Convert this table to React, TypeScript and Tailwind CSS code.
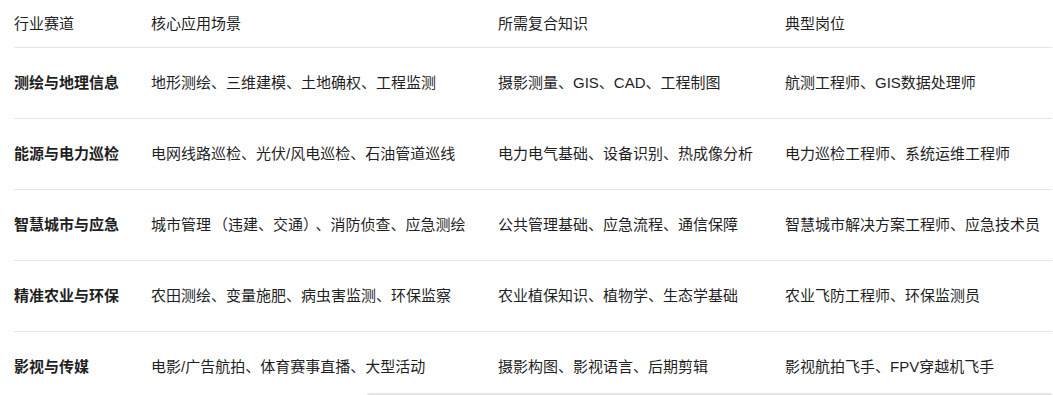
import React from "react";

const header = ["行业赛道", "核心应用场景", "所需复合知识", "典型岗位"];
const rows = [
  ["测绘与地理信息", "地形测绘、三维建模、土地确权、工程监测", "摄影测量、GIS、CAD、工程制图", "航测工程师、GIS数据处理师"],
  ["能源与电力巡检", "电网线路巡检、光伏/风电巡检、石油管道巡线", "电力电气基础、设备识别、热成像分析", "电力巡检工程师、系统运维工程师"],
  ["智慧城市与应急", "城市管理（违建、交通）、消防侦查、应急测绘", "公共管理基础、应急流程、通信保障", "智慧城市解决方案工程师、应急技术员"],
  ["精准农业与环保", "农田测绘、变量施肥、病虫害监测、环保监察", "农业植保知识、植物学、生态学基础", "农业飞防工程师、环保监测员"],
  ["影视与传媒", "电影/广告航拍、体育赛事直播、大型活动", "摄影构图、影视语言、后期剪辑", "影视航拍飞手、FPV穿越机飞手"],
];

const cols = "grid grid-cols-[137px_347px_287px_1fr]";

function Cell({ text }: { text: string }) {
  if (text.includes("（")) {
    return (
      <div className="whitespace-nowrap">
        城市管理<span className="ml-[2px]">（</span>违建、交通<span className="mr-[5px]">）</span>、消防侦查、应急测绘
      </div>
    );
  }
  return <div className="whitespace-nowrap">{text}</div>;
}

export default function App() {
  return (
    <div
      className="relative h-[395px] w-[1053px] overflow-hidden bg-white text-[15px] text-[#1f1f1f]"
      style={{ fontFamily: '"Liberation Sans", Arial, "Noto Sans CJK SC", sans-serif' }}
    >
      <div className="pl-[14px] pr-px">
        <div className={`${cols} border-b border-[#e5e5e5] pt-[13px] pb-3 leading-[22px]`}>
          {header.map((h) => (
            <div key={h} className="whitespace-nowrap">{h}</div>
          ))}
        </div>
        {rows.map((r) => (
          <div key={r[0]} className={`${cols} border-b border-[#e5e5e5] py-6 leading-[22px]`}>
            <div className="whitespace-nowrap font-bold">{r[0]}</div>
            <Cell text={r[1]} />
            <Cell text={r[2]} />
            <Cell text={r[3]} />
          </div>
        ))}
      </div>
      <div className="absolute left-[366px] right-0 top-[393px] h-[8px] rounded-full bg-[#e4e4e4]" />
    </div>
  );
}
